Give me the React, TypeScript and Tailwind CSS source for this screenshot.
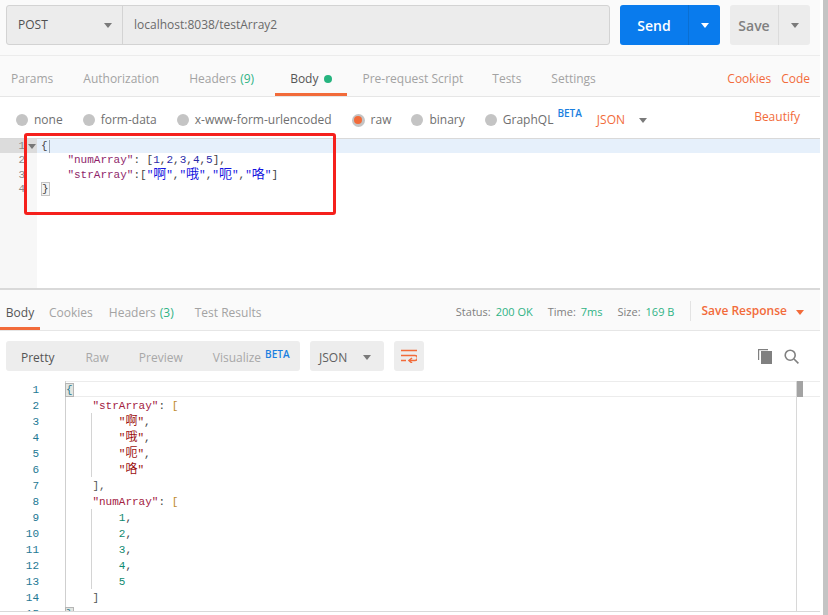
import React from 'react';

const ui = "font-['Open_Sans','Noto_Sans',sans-serif]";
const mono = "font-['Liberation_Mono','Noto_Sans_CJK_SC',monospace]";

const Caret = ({ className = 'border-t-[#7a7a7a]' }: { className?: string }) => (
  <span className={`block w-0 h-0 border-x-[4px] border-x-transparent border-t-[5px] ${className}`}></span>
);

const Radio = ({ label, on }: { label: string; on?: boolean }) => (
  <div className="flex items-center gap-[6px]">
    {on ? (
      <span className="w-[13px] h-[13px] rounded-full bg-[#c4c4c4] flex items-center justify-center">
        <span className="w-[8px] h-[8px] rounded-full bg-[#f26b3a]"></span>
      </span>
    ) : (
      <span className="w-[12px] h-[12px] rounded-full bg-[#c4c4c4]"></span>
    )}
    <span className="text-[#6f6f6f]">{label}</span>
  </div>
);

const Beta = ({ low }: { low?: boolean }) => (
  <sup className={`text-[10px] font-semibold text-[#1a7fe0] ml-1 ${low ? 'top-[-4px]' : 'top-[-7px]'}`}>BETA</sup>
);

const Gutter = ({ n, w }: { n: number; w: string }) => (
  <span className={`${w} shrink-0 text-right`}>{n}</span>
);

const Cjk = ({ t }: { t: string }) => (
  <span className="text-[#1414e0]">"<span className="text-[13px]">{t}</span>"</span>
);

function RequestEditor() {
  return (
    <div className={`${mono} relative h-[152px] border-t border-b-2 border-[#d9d9d9] text-[11px] leading-[14.3px] flex bg-white`}>
      <div className="w-[37px] shrink-0 bg-[#f7f7f7] text-[#8a8a8a]">
        {[1, 2, 3, 4].map((n) => (
          <div key={n} className={`h-[14.3px] flex items-center ${n === 1 ? 'bg-[#dcdcdc]' : ''}`}>
            <span className="w-[25px] text-right text-[11px]">{n}</span>
            {n === 1 && <span className="ml-[3px]"><Caret className="border-x-[3px] border-t-[4px] border-t-[#777777]" /></span>}
          </div>
        ))}
      </div>
      <div className="flex-1 text-[#444444] whitespace-pre">
        <div className="h-[14.3px] bg-[#e6f0fb] pl-[4px] flex items-center">{'{'}<span className="ml-px w-px h-[13px] bg-[#9aa5b0]"></span></div>
        <div className="h-[14.3px] pl-[4px]">
          {'    '}<span className="text-[#8f1f6b]">"numArray"</span>: [<span className="text-[#2a2aa8]">1</span>,<span className="text-[#2a2aa8]">2</span>,<span className="text-[#2a2aa8]">3</span>,<span className="text-[#2a2aa8]">4</span>,<span className="text-[#2a2aa8]">5</span>],
        </div>
        <div className="h-[14.3px] pl-[4px]">
          {'    '}<span className="text-[#8f1f6b]">"strArray"</span>:[<Cjk t="啊" />,<Cjk t="哦" />,<Cjk t="呃" />,<Cjk t="咯" />]
        </div>
        <div className="h-[14.3px] pl-[4px]"><span className="border border-[#c4c4c4] bg-[#f4f4f4]">{'}'}</span></div>
      </div>
    </div>
  );
}

const K = ({ t }: { t: string }) => <span className="text-[#a3213f]">{t}</span>;
const S = ({ t }: { t: string }) => (
  <span className="text-[#9c1010]">"<span className="text-[12px]">{t}</span>"</span>
);
const N = ({ t }: { t: string }) => <span className="text-[#0f8a70]">{t}</span>;
const B = ({ t }: { t: string }) => <span className="text-[#c08a2c]">{t}</span>;

const lines: React.ReactNode[] = [
  <span className="-ml-px bg-[#e2e6e2] border border-[#b5b5b5] text-[#2c7a8c]">{'{'}</span>,
  <>{'    '}<K t={'"strArray"'} />: <B t="[" /></>,
  <>{'        '}<S t="啊" />,</>,
  <>{'        '}<S t="哦" />,</>,
  <>{'        '}<S t="呃" />,</>,
  <>{'        '}<S t="咯" /></>,
  <>{'    '}<span className="text-[#555555]">],</span></>,
  <>{'    '}<K t={'"numArray"'} />: <B t="[" /></>,
  <>{'        '}<N t="1" />,</>,
  <>{'        '}<N t="2" />,</>,
  <>{'        '}<N t="3" />,</>,
  <>{'        '}<N t="4" />,</>,
  <>{'        '}<N t="5" /></>,
  <>{'    '}<span className="text-[#555555]">]</span></>,
  <span className="-ml-px bg-[#e2e6e2] border border-[#b5b5b5] text-[#2c7a8c]">{'}'}</span>,
];

function ResponseCode() {
  return (
    <div className={`${mono} relative mt-[10px] h-[230px] shrink-0 overflow-hidden text-[11px] leading-[19px] flex bg-white`}>
      <div className="w-[65px] shrink-0 text-[#237893]">
        {lines.map((_, i) => (
          <div key={i} className="h-[16px] flex">
            <Gutter n={i + 1} w="w-[39px]" />
          </div>
        ))}
      </div>
      <div className="flex-1 border-l border-[#cfcfcf] whitespace-pre text-[#444444] relative">
        {lines.map((l, i) => (
          <div key={i} className={`h-[16px] ${i === 0 ? 'border-y border-[#ececec] leading-[16px]' : ''}`}>{l}</div>
        ))}
        <span className="absolute left-[25px] top-[32px] h-[64px] w-px bg-[#d4d4d4]"></span>
        <span className="absolute left-[25px] top-[128px] h-[80px] w-px bg-[#d4d4d4]"></span>
      </div>
      <div className="absolute left-[796px] top-0 bottom-0 w-px bg-[#d8d8d8]"></div>
      <div className="absolute left-[797px] top-0 w-[6px] h-[16px] bg-[#a3a3a3]"></div>
    </div>
  );
}

export default function App() {
  return (
    <div className={`${ui} w-[828px] h-[615px] overflow-hidden flex bg-white text-[12px] text-[#6f6f6f]`}>
      <div className="w-[820px] shrink-0 relative flex flex-col">
        <div className="h-[56px] shrink-0 bg-[#fafafa] border-b border-[#ececec] flex items-start pt-[5px] pl-[6px]">
          <div className="w-[604px] h-[40px] flex bg-[#ececec] border border-[#d3d3d3] rounded-[3px]">
            <div className="w-[116px] border-r border-[#d3d3d3] flex items-center justify-between pl-[11px] pr-[10px] text-[#505050]">
              POST <Caret />
            </div>
            <div className="flex-1 flex items-center pl-[11px] text-[#6a6a6a]">localhost:8038/testArray2</div>
          </div>
          <div className="ml-[10px] w-[100px] h-[40px] bg-[#097bed] rounded-[3px] flex text-white">
            <div className="w-[69px] border-r border-[#0a6fd2] flex items-center justify-center text-[14px] font-semibold">Send</div>
            <div className="flex-1 flex items-center justify-center"><Caret className="border-t-white" /></div>
          </div>
          <div className="ml-[10px] w-[80px] h-[40px] bg-[#ececec] rounded-[3px] flex text-[#808080]">
            <div className="w-[49px] border-r border-[#dcdcdc] flex items-center justify-center text-[14px] font-semibold">Save</div>
            <div className="flex-1 flex items-center justify-center"><Caret /></div>
          </div>
        </div>

        <div className="h-[41px] shrink-0 pt-[5px] bg-[#fafafa] border-b border-[#e6e6e6] flex items-stretch text-[#a3a3a3] text-[12px]">
          <div className="flex items-center pl-[11px] pr-[15px]">Params</div>
          <div className="flex items-center px-[15px]">Authorization</div>
          <div className="flex items-center pl-[15px] pr-[19px] gap-1">Headers <span className="text-[#2fb385]">(9)</span></div>
          <div className="flex items-center px-[15px] gap-[6px] text-[#555555] border-b-[3px] border-[#f26b3a] pt-[3px] ml-[2px]">
            Body <span className="w-[8px] h-[8px] rounded-full bg-[#26b47f]"></span>
          </div>
          <div className="flex items-center px-[15px]">Pre-request Script</div>
          <div className="flex items-center pl-[14px] pr-[15px]">Tests</div>
          <div className="flex items-center px-[15px]">Settings</div>
          <div className="ml-auto flex items-center gap-[10px] pr-[10px] text-[#f26b3a]"><span>Cookies</span><span>Code</span></div>
        </div>

        <div className="h-[41px] shrink-0 flex items-center pl-[16px] gap-[20px] pt-[5px]">
          <Radio label="none" />
          <Radio label="form-data" />
          <Radio label="x-www-form-urlencoded" />
          <Radio label="raw" on />
          <Radio label="binary" />
          <div className="flex items-center gap-[6px]">
            <span className="w-[12px] h-[12px] rounded-full bg-[#c4c4c4]"></span>
            <span className="text-[#6f6f6f]">GraphQL<Beta /></span>
          </div>
          <div className="flex items-center gap-[14px] -ml-[5px] text-[#f26b3a]">JSON <Caret /></div>
          <span className="ml-auto mr-[20px] text-[#f26b3a] -mt-[7px]">Beautify</span>
        </div>

        <RequestEditor />

        <div className="h-[41px] shrink-0 pt-[5px] bg-[#fafafa] border-b border-[#e6e6e6] flex items-stretch text-[#a3a3a3]">
          <div className="w-[40px] flex items-center justify-center text-[#555555] border-b-[3px] border-[#f26b3a] pt-[3px]">Body</div>
          <div className="flex items-center pl-[9px] pr-[16px]">Cookies</div>
          <div className="flex items-center gap-1 pr-[21px]">Headers <span className="text-[#2fb385]">(3)</span></div>
          <div className="flex items-center">Test Results</div>
          <div className="ml-auto flex items-center pr-[16px] text-[11px]">
            <span className="text-[#808080]">Status:</span><span className="ml-[5px] text-[#2fb385]">200 OK</span>
            <span className="ml-[15px] text-[#808080]">Time:</span><span className="ml-[5px] text-[#2fb385]">7ms</span>
            <span className="ml-[15px] text-[#808080]">Size:</span><span className="ml-[5px] text-[#2fb385]">169 B</span>
            <span className="ml-[16px] w-px h-[20px] bg-[#e3e3e3] -mt-[4px]"></span>
            <span className="ml-[10px] text-[12px] font-semibold text-[#f26b3a] -mt-[3px]">Save Response</span>
            <span className="ml-[9px]"><Caret className="border-t-[#f26b3a]" /></span>
          </div>
        </div>

        <div className="mt-[10px] h-[30px] shrink-0 flex pl-[6px] pr-[21px]">
          <div className="w-[294px] flex items-center bg-[#ededed] rounded-[3px] text-[#a8a8a8] pl-[15px] pt-[3px]">
            <span className="text-[#555555]">Pretty</span>
            <span className="ml-[31px]">Raw</span>
            <span className="ml-[30px]">Preview</span>
            <span className="ml-[30px]">Visualize<Beta low /></span>
          </div>
          <div className="ml-[10px] w-[74px] bg-[#ededed] rounded-[3px] flex items-center justify-between pl-[9px] pr-[13px] text-[#606060] pt-[3px]">
            JSON <Caret />
          </div>
          <div className="ml-[10px] w-[30px] bg-[#ededed] rounded-[3px] flex items-center justify-center">
            <svg width="16" height="14" viewBox="0 0 16 14" fill="none" stroke="#f26b3a" strokeWidth="1.6">
              <path d="M0 1.5h16M0 6.5h14a2.5 2.5 0 0 1 0 5H8.5M0 11.5h5" />
              <path d="M11 9l-3 2.5L11 14" />
            </svg>
          </div>
          <div className="ml-auto flex items-center gap-[12px]">
            <svg width="14" height="15" viewBox="0 0 14 15" fill="#808080">
              <path d="M3 2h11v13H3z" />
              <path d="M0 0h10v1.2H1.2V11H0z" />
            </svg>
            <svg width="15" height="15" viewBox="0 0 15 15" fill="none" stroke="#808080" strokeWidth="1.6">
              <circle cx="6.2" cy="6.2" r="5" />
              <path d="M10 10l4.4 4.4" />
            </svg>
          </div>
        </div>

        <ResponseCode />
        <div className="h-px shrink-0 bg-[#d9d9d9]"></div>

        <div className="absolute left-[24px] top-[133px] w-[312px] h-[82px] border-[3px] border-[#f5201c] rounded-[3px]"></div>
      </div>
      <div className="w-[3px] shrink-0 bg-white"></div>
      <div className="w-[5px] shrink-0 bg-[#c4c4c4]"></div>
    </div>
  );
}
